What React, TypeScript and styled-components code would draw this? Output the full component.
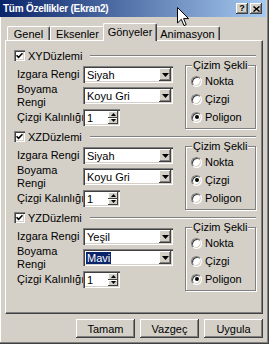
import React from 'react';
import styled, { createGlobalStyle, css } from 'styled-components';

const GlobalStyle = createGlobalStyle`
  html, body { margin: 0; padding: 0; }
  body {
    background: #d4d0c8;
    font-family: "Liberation Sans", Arial, sans-serif;
    font-size: 11px;
    color: #000;
    overflow: hidden;
  }
  * { box-sizing: border-box; }
`;

const Window = styled.div`
  position: relative;
  width: 269px;
  height: 344px;
  background: #d4d0c8;
  display: flex;
  flex-direction: column;
  padding: 0 3px 3px 0;
  box-shadow: inset -1px -1px 0 #404040, inset -2px -2px 0 #808080, inset 1px 0 0 #fff;
`;

const TitleBar = styled.div`
  height: 17px;
  flex: none;
  display: flex;
  align-items: center;
  padding: 0 4px 0 3px;
  background: linear-gradient(to right, #0a246a, #a6caf0);
  color: #fff;
`;

const Title = styled.div`
  flex: 1;
  font-weight: bold;
  font-size: 10px;
  letter-spacing: -0.25px;
  white-space: nowrap;
`;

const CaptionButtons = styled.div`
  display: flex;
  gap: 2px;
`;

const CaptionButton = styled.div`
  width: 12px;
  height: 11px;
  background: #d4d0c8;
  color: #000;
  box-shadow: inset -1px -1px 0 #404040, inset 1px 1px 0 #fff, inset -2px -2px 0 #808080;
  display: flex;
  align-items: center;
  justify-content: center;
  font-size: 9px;
  font-weight: bold;
  line-height: 1;
`;

const Body = styled.div`
  flex: 1;
  display: flex;
  flex-direction: column;
  padding: 6px 3px 0 5px;
`;

const TabStrip = styled.div`
  height: 17px;
  flex: none;
  display: flex;
  align-items: flex-end;
  padding-left: 2px;
  position: relative;
  z-index: 1;
`;

const Tab = styled.div<{ $w: number; $active?: boolean }>`
  width: ${(p) => p.$w}px;
  height: 14px;
  display: flex;
  align-items: center;
  justify-content: center;
  border-top: 1px solid #fff;
  border-left: 1px solid #fff;
  border-right: 1px solid #404040;
  box-shadow: inset -1px 0 0 #808080;
  border-radius: 2px 2px 0 0;
  background: #d4d0c8;
  white-space: nowrap;
  ${(p) =>
    p.$active &&
    css`
      height: 18px;
      margin: 0 -2px -1px;
      padding-bottom: 2px;
      position: relative;
      z-index: 1;
    `}
`;

const Panel = styled.div`
  flex: none;
  height: 274px;
  border-top: 1px solid #fff;
  border-left: 1px solid #fff;
  border-right: 1px solid #404040;
  border-bottom: 1px solid #404040;
  box-shadow: inset -1px -1px 0 #808080;
  padding: 8px 6px 0 8px;
  display: flex;
  flex-direction: column;
`;

const Section = styled.div`
  height: 81px;
  flex: none;
  display: flex;
  flex-direction: column;
`;

const SectionHeader = styled.div`
  height: 13px;
  display: flex;
  align-items: center;
`;

const CheckBox = styled.span`
  width: 11px;
  height: 11px;
  flex: none;
  background: #fff;
  box-shadow: inset 1px 1px 0 #808080, inset 2px 2px 0 #404040, inset -1px -1px 0 #fff,
    inset -2px -2px 0 #d4d0c8;
  display: flex;
  align-items: center;
  justify-content: center;
`;

const HeaderLabel = styled.span`
  margin-left: 3px;
  white-space: nowrap;
`;

const HeaderLine = styled.div`
  flex: 1;
  margin-left: 8px;
  height: 2px;
  border-top: 1px solid #808080;
  border-bottom: 1px solid #fff;
`;

const SectionBody = styled.div`
  margin-top: 3px;
  display: flex;
  gap: 12px;
`;

const Form = styled.div`
  width: 159px;
  padding-left: 3px;
  display: grid;
  grid-template-columns: 66px 90px;
  grid-template-rows: 19px 23px 21px;
  align-items: center;
`;

const FieldLabel = styled.div`
  line-height: 13px;
  white-space: nowrap;
`;

const SelectBox = styled.div`
  width: 90px;
  height: 17px;
  background: #fff;
  box-shadow: inset 1px 1px 0 #808080, inset 2px 2px 0 #404040, inset -1px -1px 0 #fff,
    inset -2px -2px 0 #d4d0c8;
  display: flex;
  align-items: center;
  padding: 2px 2px 2px 3px;
`;

const SelectText = styled.span<{ $selected?: boolean }>`
  flex: 1;
  display: flex;
  align-items: center;
  white-space: nowrap;
  span {
    padding: 0 1px;
    ${(p) =>
      p.$selected &&
      css`
        background: #0a246a;
        color: #fff;
      `}
  }
`;

const DropButton = styled.div`
  width: 12px;
  height: 13px;
  flex: none;
  background: #d4d0c8;
  box-shadow: inset -1px -1px 0 #404040, inset 1px 1px 0 #fff, inset -2px -2px 0 #808080;
  display: flex;
  align-items: center;
  justify-content: center;
`;

const SpinBox = styled.div`
  width: 37px;
  height: 17px;
  background: #fff;
  box-shadow: inset 1px 1px 0 #808080, inset 2px 2px 0 #404040, inset -1px -1px 0 #fff,
    inset -2px -2px 0 #d4d0c8;
  display: flex;
  align-items: center;
  padding: 2px 2px 2px 4px;
`;

const SpinText = styled.span`
  flex: 1;
`;

const SpinButtons = styled.div`
  width: 10px;
  height: 13px;
  display: flex;
  flex-direction: column;
`;

const SpinButton = styled.div`
  flex: 1;
  background: #d4d0c8;
  box-shadow: inset -1px -1px 0 #404040, inset 1px 1px 0 #fff;
  display: flex;
  align-items: center;
  justify-content: center;
`;

const GroupBox = styled.div`
  position: relative;
  width: 71px;
  height: 64px;
  border: 1px solid #808080;
  box-shadow: inset 1px 1px 0 #fff, 1px 1px 0 #fff;
  padding: 6px 0 0 5px;
  display: flex;
  flex-direction: column;
`;

const GroupTitle = styled.span`
  position: absolute;
  left: 6px;
  top: -7px;
  padding: 0 1px;
  background: #d4d0c8;
  line-height: 13px;
  white-space: nowrap;
`;

const RadioRow = styled.div`
  height: 18px;
  display: flex;
  align-items: center;
  gap: 3px;
`;

const Radio = styled.span<{ $checked?: boolean }>`
  position: relative;
  width: 11px;
  height: 11px;
  flex: none;
  border-radius: 50%;
  background: #fff;
  border: 1px solid;
  border-color: #808080 #fff #fff #808080;
  box-shadow: inset 1px 1px 0 #404040, inset -1px -1px 0 #d4d0c8;
  ${(p) =>
    p.$checked &&
    css`
      &::after {
        content: '';
        position: absolute;
        left: 2.5px;
        top: 2.5px;
        width: 4px;
        height: 4px;
        border-radius: 50%;
        background: #000;
      }
    `}
`;

const ButtonRow = styled.div`
  display: flex;
  justify-content: flex-end;
  gap: 5px;
  margin-top: 5px;
`;

const Button = styled.div`
  width: 59px;
  height: 19px;
  background: #d4d0c8;
  box-shadow: inset -1px -1px 0 #404040, inset 1px 1px 0 #fff, inset -2px -2px 0 #808080;
  display: flex;
  align-items: center;
  justify-content: center;
`;

const Cursor = styled.svg`
  position: absolute;
  left: 177px;
  top: 7px;
`;

const DownArrow = () => (
  <svg width="7" height="4" viewBox="0 0 7 4">
    <path d="M0 0h7L3.5 4z" fill="#000" />
  </svg>
);

const SmallArrow = ({ up }: { up?: boolean }) => (
  <svg width="5" height="3" viewBox="0 0 5 3">
    <path d={up ? 'M0 3h5L2.5 0z' : 'M0 0h5L2.5 3z'} fill="#000" />
  </svg>
);

const CheckMark = () => (
  <svg width="7" height="7" viewBox="0 0 7 7">
    <path d="M0.5 3.2 L2.6 5.3 L6.5 1.2" fill="none" stroke="#000" strokeWidth="1.6" />
  </svg>
);

type SectionData = {
  name: string;
  grid: string;
  paint: string;
  paintSelected?: boolean;
  shape: string;
};

const sections: SectionData[] = [
  { name: 'XYDüzlemi', grid: 'Siyah', paint: 'Koyu Gri', shape: 'Poligon' },
  { name: 'XZDüzlemi', grid: 'Siyah', paint: 'Koyu Gri', shape: 'Çizgi' },
  { name: 'YZDüzlemi', grid: 'Yeşil', paint: 'Mavi', paintSelected: true, shape: 'Poligon' },
];

const shapes = ['Nokta', 'Çizgi', 'Poligon'];

const Select = ({ value, selected }: { value: string; selected?: boolean }) => (
  <SelectBox>
    <SelectText $selected={selected}>
      <span>{value}</span>
    </SelectText>
    <DropButton>
      <DownArrow />
    </DropButton>
  </SelectBox>
);

const PlaneSection = ({ data }: { data: SectionData }) => (
  <Section>
    <SectionHeader>
      <CheckBox>
        <CheckMark />
      </CheckBox>
      <HeaderLabel>{data.name}</HeaderLabel>
      <HeaderLine />
    </SectionHeader>
    <SectionBody>
      <Form>
        <FieldLabel>Izgara Rengi</FieldLabel>
        <Select value={data.grid} />
        <FieldLabel>
          Boyama
          <br />
          Rengi
        </FieldLabel>
        <Select value={data.paint} selected={data.paintSelected} />
        <FieldLabel>Çizgi Kalınlığı</FieldLabel>
        <SpinBox>
          <SpinText>1</SpinText>
          <SpinButtons>
            <SpinButton>
              <SmallArrow up />
            </SpinButton>
            <SpinButton>
              <SmallArrow />
            </SpinButton>
          </SpinButtons>
        </SpinBox>
      </Form>
      <GroupBox>
        <GroupTitle>Çizim Şekli</GroupTitle>
        {shapes.map((s) => (
          <RadioRow key={s}>
            <Radio $checked={s === data.shape} />
            <span>{s}</span>
          </RadioRow>
        ))}
      </GroupBox>
    </SectionBody>
  </Section>
);

const tabs = [
  { label: 'Genel', w: 43 },
  { label: 'Eksenler', w: 55 },
  { label: 'Gönyeler', w: 54, active: true },
  { label: 'Animasyon', w: 65 },
];

export default function App() {
  return (
    <>
      <GlobalStyle />
      <Window>
        <TitleBar>
          <Title>Tüm Özellikler (Ekran2)</Title>
          <CaptionButtons>
            <CaptionButton>?</CaptionButton>
            <CaptionButton>
              <svg width="7" height="6" viewBox="0 0 7 6">
                <path d="M0.5 0.5L6.5 5.5M6.5 0.5L0.5 5.5" stroke="#000" strokeWidth="1.5" />
              </svg>
            </CaptionButton>
          </CaptionButtons>
        </TitleBar>
        <Body>
          <TabStrip>
            {tabs.map((t) => (
              <Tab key={t.label} $w={t.w} $active={t.active}>
                {t.label}
              </Tab>
            ))}
          </TabStrip>
          <Panel>
            {sections.map((s) => (
              <PlaneSection key={s.name} data={s} />
            ))}
          </Panel>
          <ButtonRow>
            <Button>Tamam</Button>
            <Button>Vazgeç</Button>
            <Button>Uygula</Button>
          </ButtonRow>
        </Body>
        <Cursor width="13" height="20" viewBox="0 0 13 20">
          <path
            d="M0.5 0.5 L0.5 16 L4.3 12.3 L7 18.6 L9.2 17.6 L6.6 11.6 L11.6 11.6 Z"
            fill="#fff"
            stroke="#000"
            strokeWidth="1"
          />
        </Cursor>
      </Window>
    </>
  );
}
